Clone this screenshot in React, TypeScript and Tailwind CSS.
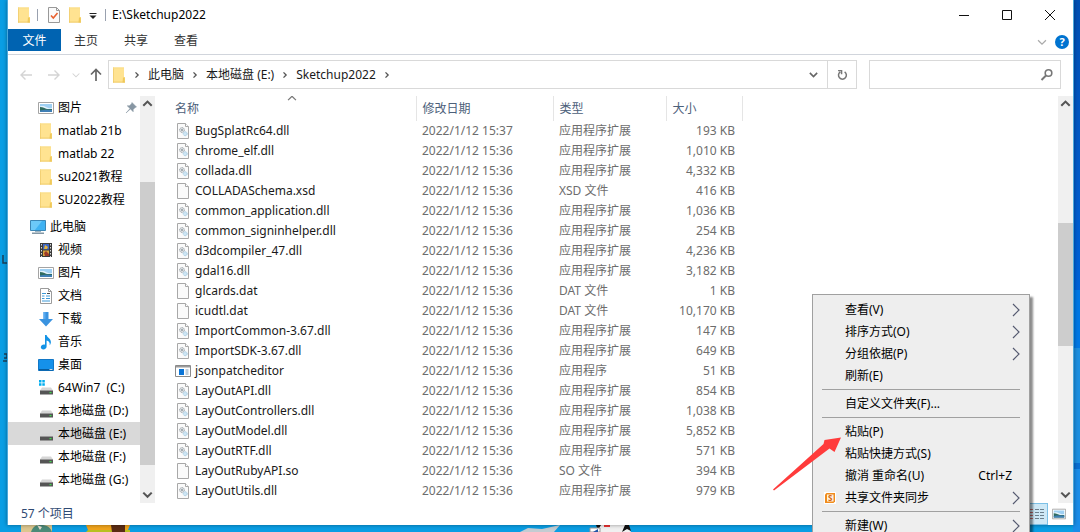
import React from 'react';
import clsx from 'clsx';

type FileKind = 'dll' | 'blank' | 'exe';
type NavIcon = 'picture' | 'folder' | 'pc' | 'video' | 'document' | 'download' | 'music' | 'desktop' | 'system' | 'drive';

interface FileItem {
  name: string;
  date: string;
  type: string;
  size: string;
  kind: FileKind;
}

interface NavItem {
  label: string;
  icon: NavIcon;
  pinned?: boolean;
  selected?: boolean;
}

interface MenuItem {
  label: string;
  submenu?: boolean;
  shortcut?: string;
  wps?: boolean;
}

const DLL = '应用程序扩展';

const files: FileItem[] = [
  { name: 'BugSplatRc64.dll', date: '2022/1/12 15:37', type: DLL, size: '193 KB', kind: 'dll' },
  { name: 'chrome_elf.dll', date: '2022/1/12 15:36', type: DLL, size: '1,010 KB', kind: 'dll' },
  { name: 'collada.dll', date: '2022/1/12 15:36', type: DLL, size: '4,332 KB', kind: 'dll' },
  { name: 'COLLADASchema.xsd', date: '2022/1/12 15:36', type: 'XSD 文件', size: '416 KB', kind: 'blank' },
  { name: 'common_application.dll', date: '2022/1/12 15:36', type: DLL, size: '1,036 KB', kind: 'dll' },
  { name: 'common_signinhelper.dll', date: '2022/1/12 15:36', type: DLL, size: '254 KB', kind: 'dll' },
  { name: 'd3dcompiler_47.dll', date: '2022/1/12 15:36', type: DLL, size: '4,236 KB', kind: 'dll' },
  { name: 'gdal16.dll', date: '2022/1/12 15:36', type: DLL, size: '3,182 KB', kind: 'dll' },
  { name: 'glcards.dat', date: '2022/1/12 15:36', type: 'DAT 文件', size: '1 KB', kind: 'blank' },
  { name: 'icudtl.dat', date: '2022/1/12 15:36', type: 'DAT 文件', size: '10,170 KB', kind: 'blank' },
  { name: 'ImportCommon-3.67.dll', date: '2022/1/12 15:36', type: DLL, size: '147 KB', kind: 'dll' },
  { name: 'ImportSDK-3.67.dll', date: '2022/1/12 15:36', type: DLL, size: '649 KB', kind: 'dll' },
  { name: 'jsonpatcheditor', date: '2022/1/12 15:36', type: '应用程序', size: '51 KB', kind: 'exe' },
  { name: 'LayOutAPI.dll', date: '2022/1/12 15:36', type: DLL, size: '854 KB', kind: 'dll' },
  { name: 'LayOutControllers.dll', date: '2022/1/12 15:36', type: DLL, size: '1,038 KB', kind: 'dll' },
  { name: 'LayOutModel.dll', date: '2022/1/12 15:36', type: DLL, size: '5,852 KB', kind: 'dll' },
  { name: 'LayOutRTF.dll', date: '2022/1/12 15:36', type: DLL, size: '571 KB', kind: 'dll' },
  { name: 'LayOutRubyAPI.so', date: '2022/1/12 15:36', type: 'SO 文件', size: '394 KB', kind: 'blank' },
  { name: 'LayOutUtils.dll', date: '2022/1/12 15:36', type: DLL, size: '979 KB', kind: 'dll' },
];

const quickAccess: NavItem[] = [
  { label: '图片', icon: 'picture', pinned: true },
  { label: 'matlab 21b', icon: 'folder' },
  { label: 'matlab 22', icon: 'folder' },
  { label: 'su2021教程', icon: 'folder' },
  { label: 'SU2022教程', icon: 'folder' },
];

const thisPc: NavItem[] = [
  { label: '视频', icon: 'video' },
  { label: '图片', icon: 'picture' },
  { label: '文档', icon: 'document' },
  { label: '下载', icon: 'download' },
  { label: '音乐', icon: 'music' },
  { label: '桌面', icon: 'desktop' },
  { label: '64Win7  (C:)', icon: 'system' },
  { label: '本地磁盘 (D:)', icon: 'drive' },
  { label: '本地磁盘 (E:)', icon: 'drive', selected: true },
  { label: '本地磁盘 (F:)', icon: 'drive' },
  { label: '本地磁盘 (G:)', icon: 'drive' },
];

const menuGroups: MenuItem[][] = [
  [
    { label: '查看(V)', submenu: true },
    { label: '排序方式(O)', submenu: true },
    { label: '分组依据(P)', submenu: true },
    { label: '刷新(E)' },
  ],
  [{ label: '自定义文件夹(F)...' }],
  [
    { label: '粘贴(P)' },
    { label: '粘贴快捷方式(S)' },
    { label: '撤消 重命名(U)', shortcut: 'Ctrl+Z' },
    { label: '共享文件夹同步', submenu: true, wps: true },
  ],
  [{ label: '新建(W)', submenu: true }],
];

function FolderIcon() {
  return (
    <svg width="16" height="16" viewBox="0 0 16 16" className="shrink-0">
      <path d="M2 .5h11v9.500h1v5.500H2z" fill="#ffe391" />
      <path d="M2 .5h1v15H2z" fill="#f3d175" />
      <path d="M2 .5h11v1H2z" fill="#f9dc88" />
      <path d="M12 10.500h1.800v5H11.500z" fill="#f0c95a" />
      <path d="M2 14.700h12v.8H2z" fill="#ecc55c" />
    </svg>
  );
}

function Glyph({ d, size = 16, color = '#555', width = 1.4 }: { d: string; size?: number; color?: string; width?: number }) {
  return (
    <svg width={size} height={size} viewBox="0 0 16 16" fill="none" stroke={color} strokeWidth={width} className="shrink-0">
      <path d={d} />
    </svg>
  );
}

function PictureIcon({ size = 16 }: { size?: number }) {
  return (
    <svg width={size} height={size} viewBox="0 0 16 16" className="shrink-0">
      <path d="M.5 2.500h15v11H.5z" fill="#fff" stroke="#a4a4a4" />
      <path d="M2 4h12v8H2z" fill="#9fd0f3" />
      <path d="M2 6.500c3-1 5 0 7 1s3 .7 5 .5V10H2z" fill="#e4f2fb" />
      <path d="M2 7c3 .2 5 1.200 7 2h5v3H2z" fill="#2f6b5f" />
      <path d="M2 10.500c4-1 8-.6 12-.4V12H2z" fill="#3f7fb5" />
    </svg>
  );
}

function NavGlyph({ icon }: { icon: NavIcon }) {
  switch (icon) {
    case 'folder':
      return <FolderIcon />;
    case 'picture':
      return <PictureIcon />;
    case 'pc':
      return (
        <svg width="16" height="16" viewBox="0 0 16 16" className="shrink-0">
          <path d="M.5 1.500h15v10H.5z" fill="#3fb2f2" stroke="#3b86b5" />
          <path d="M1 2h11L5 11H1z" fill="#6cc9f8" />
          <path d="M5 12h6v1.200H5z" fill="#9cb4c2" />
          <path d="M2 13.500h12V15H2z" fill="#8397a5" />
        </svg>
      );
    case 'video':
      return (
        <svg width="16" height="16" viewBox="0 0 16 16" className="shrink-0">
          <path d="M2 1h12v14H2z" fill="#3b3b3b" />
          <path d="M5 2h6v5.500H5z" fill="#3d66c4" />
          <path d="M5 8.500h6V14H5z" fill="#d8a63c" />
          <path d="M7 3l3 2-1 2H6z" fill="#e5b63e" />
          <path d="M6 11l2-2 3 3v2H7z" fill="#9c3b2a" />
          <path d="M3.500 2v13M12.500 2v13" stroke="#d8d8d8" strokeWidth="1" strokeDasharray="1.500 1.500" />
        </svg>
      );
    case 'document':
      return (
        <svg width="16" height="16" viewBox="0 0 16 16" className="shrink-0">
          <path d="M2.500.5h8l3 3v12h-11z" fill="#fff" stroke="#9b9b9b" />
          <path d="M10.500.5v3h3" fill="none" stroke="#9b9b9b" />
          <path d="M4 5.500h4M4 8h2.500M8 8h4M4 10.500h2.500M8 10.500h4M4 13h8" stroke="#3d9ad8" />
          <path d="M9 5.500h3" stroke="#4a4a4a" />
        </svg>
      );
    case 'download':
      return (
        <svg width="16" height="16" viewBox="0 0 16 16" className="shrink-0">
          <path d="M5.500 1h5v7H15l-7 7.500L1 8h4.500z" fill="#3a93e0" />
          <path d="M5.500 1h2v7h-2z" fill="#5aaaf0" />
        </svg>
      );
    case 'music':
      return (
        <svg width="16" height="16" viewBox="0 0 16 16" className="shrink-0">
          <path d="M7 1h1.600c.4 2.600 4.600 3.400 4.300 7.600-.2 1.300-.6 2-1.200 2.700.5-3-1-4.300-3.100-4.900v6.100c0 1.600-1.500 2.900-3.200 2.900-1.500 0-2.600-.9-2.600-2.100 0-1.500 1.500-2.700 3.100-2.700.4 0 .8.100 1.100.2z" fill="#1493e6" />
        </svg>
      );
    case 'desktop':
      return (
        <svg width="16" height="16" viewBox="0 0 16 16" className="shrink-0">
          <path d="M.5 2.500h15v11H.5z" fill="#1591ea" stroke="#1277c6" />
          <path d="M1 12h14v1.500H1z" fill="#075c9e" />
          <path d="M11.500 12.500h3" stroke="#fff" strokeWidth=".8" />
        </svg>
      );
    default:
      return (
        <svg width="16" height="16" viewBox="0 0 16 16" className="shrink-0">
          {icon === 'system' && <path d="M1 0h2.500v2.500H1zM4.300 0h2.500v2.500H4.300zM1 3.300h2.500v2.500H1zM4.300 3.300h2.500v2.500H4.300z" fill="#00adef" />}
          <path d="M4 7.500h9l2 3H2z" fill="#d6d6d6" />
          <path d="M2 10.500h13v4H2z" fill="#555" />
          <path d="M2 10.500h13" stroke="#999" />
          <path d="M11.500 12h2v1.200h-2z" fill="#3fdc4c" />
        </svg>
      );
  }
}

function FileIcon({ kind }: { kind: FileKind }) {
  if (kind === 'exe') {
    return (
      <svg width="16" height="16" viewBox="0 0 16 16" className="shrink-0">
        <path d="M.5 2.500h15v11H.5z" fill="#fff" stroke="#8a8a8a" />
        <path d="M1 3h14v1.500H1z" fill="#9b9b9b" />
        <path d="M4 6h5v6H4z" fill="#0a74d6" />
        <path d="M10.500 7h3M10.500 9h3M10.500 11h3" stroke="#7f9db8" />
      </svg>
    );
  }
  return (
    <svg width="16" height="16" viewBox="0 0 16 16" className="shrink-0">
      <path d="M2.500.5h8l3 3v12h-11z" fill="#fafafa" stroke="#a8a8a8" />
      <path d="M10.500.5v3h3" fill="#fff" stroke="#a8a8a8" />
      {kind === 'dll' && (
        <>
          <circle cx="7" cy="7" r="2.400" fill="#dfe3e6" stroke="#9aa1a7" strokeDasharray="1.200 .5" />
          <circle cx="7" cy="7" r=".9" fill="#8a9299" />
          <circle cx="10.200" cy="10.700" r="2" fill="#cfe6f4" stroke="#a5cbe2" strokeDasharray="1.200 .5" />
        </>
      )}
    </svg>
  );
}

const CHEVRON_UP = 'M3.500 10.500 8 6l4.500 4.500';
const CHEVRON_DOWN = 'M3.500 6 8 10.500 12.500 6';
const CHEVRON_RIGHT = 'M6 4.500 9.500 8 6 11.500';

function TitleBar() {
  return (
    <header className="flex h-[29px] shrink-0 items-center pl-2">
      <FolderIcon />
      <span className="ml-[5px] h-3 w-px bg-gray-400" />
      <button aria-label="属性" className="ml-2">
        <svg width="16" height="16" viewBox="0 0 16 16">
          <path d="M2.500.5h8l3 3v12h-11z" fill="#fafafa" stroke="#999" />
          <path d="M10.500.5v3h3" fill="none" stroke="#999" />
          <path d="M5 8.500l2.300 2.500L11.500 6" fill="none" stroke="#e8602f" strokeWidth="1.600" />
        </svg>
      </button>
      <button aria-label="新建文件夹" className="ml-[5px]">
        <FolderIcon />
      </button>
      <button aria-label="自定义快速访问工具栏" className="ml-1">
        <svg width="12" height="12" viewBox="0 0 12 12">
          <path d="M2.500 4.500h7" stroke="#222" />
          <path d="M2.500 6.500h7L6 10z" fill="#222" />
        </svg>
      </button>
      <span className="mx-[6px] h-3 w-px bg-gray-400" />
      <h1 className="flex-1 text-[12px] text-black">E:\Sketchup2022</h1>
      <div className="flex items-center gap-[27px] pr-[15px]">
        <button aria-label="最小化">
          <Glyph d="M3 8.500h10" color="#111" width={1} />
        </button>
        <button aria-label="最大化">
          <Glyph d="M3.500 3.500h9v9h-9z" color="#111" width={1} />
        </button>
        <button aria-label="关闭">
          <Glyph d="M3 3l10 10M13 3L3 13" color="#111" width={1} />
        </button>
      </div>
    </header>
  );
}

function RibbonTabs() {
  return (
    <nav className="flex h-[26px] shrink-0 items-start border-b border-gray-300 text-[12px] text-[#333]">
      <button className="h-[22px] w-[53px] bg-[#0063b1] pt-[2px] text-white">文件</button>
      <button className="h-[22px] w-[50px] pt-[2px]">主页</button>
      <button className="h-[22px] w-[50px] pt-[2px]">共享</button>
      <button className="h-[22px] w-[50px] pt-[2px]">查看</button>
      <span className="flex-1" />
      <div className="flex h-[25px] items-center gap-[6px] pr-1">
        <button aria-label="展开功能区">
          <Glyph d={CHEVRON_DOWN} size={14} color="#aaa" />
        </button>
        <button aria-label="帮助" className="size-[14px] rounded-full bg-[#0073d0] text-center text-[11px] leading-[14px] font-bold text-white">
          ?
        </button>
      </div>
    </nav>
  );
}

function AddressBar() {
  return (
    <div className="flex h-[41px] shrink-0 items-center pr-3 pb-[2px] pl-[10px]">
      <button aria-label="后退">
        <Glyph d="M14 8H3M7.500 3.500L3 8l4.500 4.500" color="#d4d4d4" />
      </button>
      <button aria-label="前进" className="ml-3">
        <Glyph d="M2 8h11M8.500 3.500L13 8l-4.500 4.500" color="#d4d4d4" />
      </button>
      <button aria-label="最近浏览的位置" className="ml-2">
        <Glyph d={CHEVRON_DOWN} size={12} color="#d4d4d4" />
      </button>
      <button aria-label="上移" className="ml-[6px]">
        <Glyph d="M8 14V3M3 7.500L8 2.500l5 5" color="#666" width={1.7} />
      </button>
      <div className="ml-1 flex h-[29px] flex-1 items-center border border-[#d9d9d9] pl-[2px] text-[12px] text-[#1a1a1a]">
        <FolderIcon />
        <span className="w-1" />
        <Glyph d={CHEVRON_RIGHT} size={12} width={1.8} />
        <a href="#pc" className="mx-[5px]">此电脑</a>
        <Glyph d={CHEVRON_RIGHT} size={12} width={1.8} />
        <a href="#e" className="mx-[5px]">本地磁盘 (E:)</a>
        <Glyph d={CHEVRON_RIGHT} size={12} width={1.8} />
        <a href="#sketchup" className="mx-[5px]">Sketchup2022</a>
        <Glyph d={CHEVRON_RIGHT} size={12} width={1.8} />
        <span className="flex-1" />
        <button aria-label="以前的位置" className="px-[7px]">
          <Glyph d={CHEVRON_DOWN} size={13} color="#666" width={2} />
        </button>
        <button aria-label="刷新" className="flex h-full w-[29px] items-center justify-center border-l border-[#d9d9d9]">
          <Glyph d="M11 4.500a4.500 4.500 0 1 1-5 0M3.500 3h4v4" size={14} color="#777" width={1.7} />
        </button>
      </div>
      <label className="ml-3 flex h-[29px] w-[192px] items-center border border-[#d9d9d9] pr-[5px]">
        <input type="search" aria-label="搜索" className="min-w-0 flex-1 outline-none" />
        <svg width="16" height="16" viewBox="0 0 16 16" fill="none" stroke="#777" strokeWidth="1.600">
          <circle cx="9.500" cy="6" r="3.300" />
          <path d="M7 8.500l-4.500 4.500" strokeWidth="2" />
        </svg>
      </label>
    </div>
  );
}

function ScrollBar({ before, thumb, after }: { before: number; thumb: number; after: number }) {
  return (
    <div className="flex w-[15px] shrink-0 flex-col bg-[#f0f0f0]">
      <button aria-label="向上滚动" className="flex h-4 justify-center">
        <Glyph d={CHEVRON_UP} size={15} width={2.2} />
      </button>
      <div className="flex flex-1 flex-col">
        <span style={{ flexGrow: before }} />
        <span className="bg-[#cdcdcd]" style={{ flexGrow: thumb }} />
        <span style={{ flexGrow: after }} />
      </div>
      <button aria-label="向下滚动" className="flex h-4 justify-center">
        <Glyph d={CHEVRON_DOWN} size={15} width={2.2} />
      </button>
    </div>
  );
}

function NavRow({ item }: { item: NavItem }) {
  return (
    <li className={clsx('flex h-[23px] items-center gap-1 pl-[30px]', item.selected && 'bg-[#d9d9d9]')}>
      <NavGlyph icon={item.icon} />
      <span className="flex-1 whitespace-pre">{item.label}</span>
      {item.pinned && (
        <svg width="12" height="12" viewBox="0 0 12 12" className="mr-[3px]">
          <path d="M7 .5L11.500 5l-1.300.5-2 2 0 2.300L5.400 7 1 11 5 6.600 2.200 3.800h2.300l2-2z" fill="#8796a3" stroke="#8796a3" strokeWidth=".5" />
        </svg>
      )}
    </li>
  );
}

function Sidebar() {
  return (
    <aside className="w-[132px] shrink-0 overflow-hidden text-[12px] text-black">
      <ul className="mb-1">
        {quickAccess.map(item => (
          <NavRow key={item.label} item={item} />
        ))}
      </ul>
      <h2 className="flex h-[23px] items-center gap-1 pl-[22px]">
        <NavGlyph icon="pc" />
        此电脑
      </h2>
      <ul>
        {thisPc.map(item => (
          <NavRow key={item.label} item={item} />
        ))}
      </ul>
    </aside>
  );
}

function FileTable() {
  return (
    <main className="min-w-0 flex-1 overflow-hidden pl-3">
      <table className="w-[575px] table-fixed text-[12px] leading-[20px] text-[#6d6d6d]">
        <colgroup>
          <col className="w-[249px]" />
          <col className="w-[137px]" />
          <col className="w-[113px]" />
          <col className="w-[76px]" />
        </colgroup>
        <thead>
          <tr className="h-[25px] text-left text-[#4c607a]">
            <th className="relative border-r border-[#e5e5e5] pl-2 font-normal">
              名称
              <span className="absolute -top-[5px] left-[118px]">
                <Glyph d={CHEVRON_UP} size={14} color="#777" />
              </span>
            </th>
            <th className="border-r border-[#e5e5e5] pl-[6px] font-normal">修改日期</th>
            <th className="border-r border-[#e5e5e5] pl-[6px] font-normal">类型</th>
            <th className="border-r border-[#e5e5e5] pl-[6px] font-normal">大小</th>
          </tr>
        </thead>
        <tbody>
          {files.map(file => (
            <tr key={file.name} className="h-5 whitespace-nowrap">
              <td className="p-0">
                <div className="flex h-5 items-center gap-1 pl-2 text-[#1a1a1a]">
                  <FileIcon kind={file.kind} />
                  {file.name}
                </div>
              </td>
              <td className="p-0 pl-[6px]">{file.date}</td>
              <td className="p-0 pl-[6px]">{file.type}</td>
              <td className="p-0 pr-[7px] text-right">{file.size}</td>
            </tr>
          ))}
        </tbody>
      </table>
    </main>
  );
}

function StatusBar() {
  return (
    <footer className="flex h-[22px] shrink-0 items-center justify-between pr-[5px] pl-[13px] text-[12px] text-[#2f4a73]">
      <span>57 个项目</span>
      <div className="flex items-center gap-[2px]">
        <button aria-label="详细信息" className="border border-[#7cc0e6] bg-[#cde8f6] p-[1px]">
          <svg width="18" height="18" viewBox="0 0 18 18">
            <path d="M2 4.500h3M2 7.500h3M2 10.500h3M2 13.500h3" stroke="#c06a6a" />
            <path d="M7 4.500h4M12 4.500h4M7 7.500h4M12 7.500h4M7 10.500h4M12 10.500h4M7 13.500h4M12 13.500h4" stroke="#6c7f8c" />
          </svg>
        </button>
        <button aria-label="大图标" className="px-[2px]">
          <PictureIcon size={14} />
        </button>
      </div>
    </footer>
  );
}

function ContextMenu() {
  return (
    <div
      role="menu"
      className="absolute top-[294px] right-[50px] w-[218px] border border-[#a0a0a0] bg-[#eee] py-1 text-[12px] text-black shadow-[3px_3px_2px_rgba(0,0,0,0.45)]"
    >
      {menuGroups.map((group, i) => (
        <div key={i}>
          {i > 0 && <hr className="mx-[9px] mt-[2px] mb-[3px] border-[#a0a0a0]" />}
          {group.map(item => (
            <button key={item.label} role="menuitem" className="flex h-[22px] w-full items-center pr-[9px] pl-[11px] text-left">
              <span className="w-[21px]">
                {item.wps && (
                  <svg width="12" height="12" viewBox="0 0 12 12">
                    <path d="M0 0h12v12H0z" fill="#fff" />
                    <path d="M1 2.500L2.500 1H11v8.500L9.500 11H1z" fill="#f08c1e" />
                    <path d="M3 2.500h6.500v7H3z" fill="#fff3e0" />
                    <text x="6.200" y="9" textAnchor="middle" fontSize="8" fontWeight="700" fill="#d4660c">S</text>
                  </svg>
                )}
              </span>
              <span className="flex-1">{item.label}</span>
              {item.shortcut && <kbd className="mr-2 font-[inherit]">{item.shortcut}</kbd>}
              {item.submenu && (
                <svg width="8" height="14" viewBox="0 0 8 14" fill="none" stroke="#555a70" strokeWidth="1.200">
                  <path d="M1 1l6 6-6 6" />
                </svg>
              )}
            </button>
          ))}
        </div>
      ))}
    </div>
  );
}

function PointerArrow() {
  return (
    <svg width="70" height="56" viewBox="0 0 70 56" className="absolute top-[435px] right-[238px]">
      <path d="M1 54.500L51.500 9 52.500 5 69 2.500 62.500 17 57.500 13.500 2 55.500z" fill="#ff3b3b" />
    </svg>
  );
}

// Slices of the desktop that show around the window
function DesktopEdges() {
  return (
    <>
      <div className="absolute inset-y-0 right-0 flex w-[7px] flex-col">
        <span className="h-[290px] bg-linear-to-b from-[#0050b4] to-[#0062d8]" />
        <span className="h-[58px] bg-[#0078e4]" />
        <span className="h-[115px] bg-[#1c8fe0]" />
        <span className="h-[6px] bg-[#0a6fd2]" />
        <span className="flex-1 bg-[#1a8de8]" />
      </div>
      <svg width="640" height="8" viewBox="0 0 640 8" className="absolute bottom-0 left-0">
        <path d="M21 1h31v7H21z" fill="#dcc68e" />
        <path d="M31 8c2-6 6-8 12-7 6 1 8 4 9 7z" fill="#4c8a78" />
        <path d="M37 1l5 2-2 3z" fill="#e8e0d0" />
        <path d="M86 1h44l-2 5H88z" fill="#f0a41c" />
        <path d="M88 6h42v2H86z" fill="#b8c020" />
        <path d="M111 1h14v7h-13z" fill="#5a2c14" />
        <path d="M520 8l8-4 14 1 18-4-6 7z" fill="#c3ccd2" />
        <path d="M596 8l3-7h28l4 7z" fill="#f0f0f0" />
        <path d="M596 1h5l-3 5zM622 8l3-7h4l2 6-4-2z" fill="#111" />
        <path d="M604 1h6v2h-6z" fill="#e33" />
        <path d="M590 4h10v4h-10z" fill="#fff" stroke="#999" />
        <path d="M593 8l5-3v3z" fill="#2456a8" />
      </svg>
      <svg width="7" height="130" viewBox="0 0 7 130" className="absolute top-[252px] left-0">
        <path d="M3 3v8h4M4 102h3v4H4M3 109h4" fill="none" stroke="#1c4058" strokeWidth="1.500" />
      </svg>
    </>
  );
}

export default function App() {
  return (
    <div className="relative flex h-screen flex-col overflow-hidden bg-[#0a9ee4] pr-[6px] pb-[7px] pl-[7px] font-['Noto_Sans','Noto_Sans_CJK_SC',sans-serif]">
      <DesktopEdges />
      <section className="relative flex min-h-0 flex-1 flex-col border-x border-[#4aa8dc] bg-white shadow-[0_0_4px_rgba(0,0,0,0.4)]">
        <TitleBar />
        <RibbonTabs />
        <AddressBar />
        <div className="flex min-h-0 flex-1">
          <Sidebar />
          <ScrollBar before={70} thumb={283} after={22} />
          <FileTable />
          <ScrollBar before={111} thumb={123} after={141} />
        </div>
        <StatusBar />
      </section>
      <ContextMenu />
      <PointerArrow />
    </div>
  );
}
